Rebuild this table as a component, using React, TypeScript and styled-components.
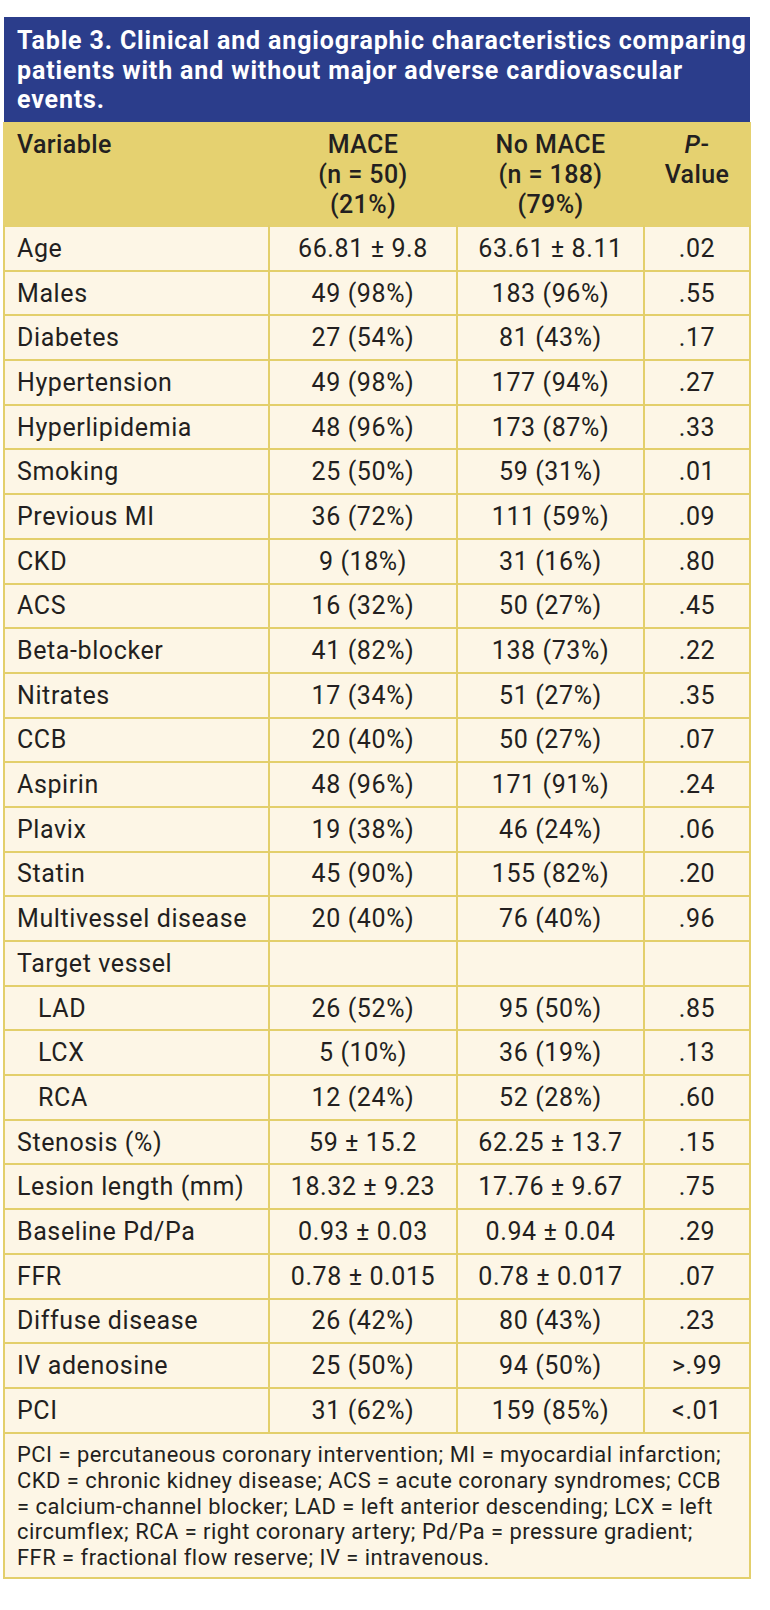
import React from "react";
import styled, { createGlobalStyle } from "styled-components";

const GlobalStyle = createGlobalStyle`
  html, body {
    margin: 0;
    padding: 0;
    background: #ffffff;
  }
  body {
    font-family: Roboto, "Open Sans", sans-serif;
    color: #231f20;
  }
`;

const GOLD = "#e5d170";
const LINE = "#e3cf6b";
const CREAM = "#fdf6e6";
const BLUE = "#2b3d8b";
const INK = "#231f20";
const COLS = "263px 186px 185px 104px";

const Page = styled.div`
  padding: 17px 0 30px 3px;
`;

const Figure = styled.section`
  width: 748px;
`;

const Title = styled.h2`
  margin: 0 0 0 1px;
  width: 746px;
  box-sizing: border-box;
  background: ${BLUE};
  color: #ffffff;
  font-family: Roboto, sans-serif;
  font-weight: 700;
  font-size: 25px;
  letter-spacing: 0.85px;
  line-height: 29.5px;
  padding: 9px 4px 7.5px 13px;
  white-space: nowrap;
`;

const TitleLine = styled.span`
  display: block;
`;

const Table = styled.div`
  display: flex;
  flex-direction: column;
  gap: 2px;
  background: ${LINE};
  padding: 0 2px 2px;
`;

const Row = styled.div<{ $height: number }>`
  display: grid;
  grid-template-columns: ${COLS};
  column-gap: 2px;
  height: ${(p) => p.$height}px;
`;

const HeaderRow = styled(Row)`
  background: ${GOLD};
  margin: 0 -2px;
  padding: 0 2px;
`;

const HeadCell = styled.div<{ $align?: "left" | "center" }>`
  background: ${GOLD};
  font-weight: 500;
  font-size: 25px;
  letter-spacing: 0.4px;
  line-height: 30px;
  color: ${INK};
  white-space: nowrap;
  text-align: ${(p) => p.$align ?? "center"};
  padding: 7.8px ${(p) => (p.$align === "left" ? "4px 0 12px" : "0")};
`;

const HeadLine = styled.span`
  display: block;
`;

const Cell = styled.div<{ $align?: "left" | "center"; $indent?: boolean }>`
  background: ${CREAM};
  display: flex;
  align-items: center;
  justify-content: ${(p) => (p.$align === "left" ? "flex-start" : "center")};
  font-size: 25px;
  font-weight: 400;
  letter-spacing: 0.6px;
  color: ${INK};
  white-space: nowrap;
  padding-left: ${(p) => (p.$align === "left" ? (p.$indent ? 33 : 12) : 0)}px;
`;

const Footnote = styled.div`
  background: ${CREAM};
  font-size: 21.9px;
  letter-spacing: 0.5px;
  line-height: 25.7px;
  color: ${INK};
  padding: 8.7px 4px 6px 12px;
  white-space: nowrap;
`;

const NoteLine = styled.span`
  display: block;
`;

type DataRow = { label: string; mace: string; noMace: string; p: string; indent?: boolean };

const rows: DataRow[] = [
  { label: "Age", mace: "66.81 ± 9.8", noMace: "63.61 ± 8.11", p: ".02" },
  { label: "Males", mace: "49 (98%)", noMace: "183 (96%)", p: ".55" },
  { label: "Diabetes", mace: "27 (54%)", noMace: "81 (43%)", p: ".17" },
  { label: "Hypertension", mace: "49 (98%)", noMace: "177 (94%)", p: ".27" },
  { label: "Hyperlipidemia", mace: "48 (96%)", noMace: "173 (87%)", p: ".33" },
  { label: "Smoking", mace: "25 (50%)", noMace: "59 (31%)", p: ".01" },
  { label: "Previous MI", mace: "36 (72%)", noMace: "111 (59%)", p: ".09" },
  { label: "CKD", mace: "9 (18%)", noMace: "31 (16%)", p: ".80" },
  { label: "ACS", mace: "16 (32%)", noMace: "50 (27%)", p: ".45" },
  { label: "Beta-blocker", mace: "41 (82%)", noMace: "138 (73%)", p: ".22" },
  { label: "Nitrates", mace: "17 (34%)", noMace: "51 (27%)", p: ".35" },
  { label: "CCB", mace: "20 (40%)", noMace: "50 (27%)", p: ".07" },
  { label: "Aspirin", mace: "48 (96%)", noMace: "171 (91%)", p: ".24" },
  { label: "Plavix", mace: "19 (38%)", noMace: "46 (24%)", p: ".06" },
  { label: "Statin", mace: "45 (90%)", noMace: "155 (82%)", p: ".20" },
  { label: "Multivessel disease", mace: "20 (40%)", noMace: "76 (40%)", p: ".96" },
  { label: "Target vessel", mace: "", noMace: "", p: "" },
  { label: "LAD", mace: "26 (52%)", noMace: "95 (50%)", p: ".85", indent: true },
  { label: "LCX", mace: "5 (10%)", noMace: "36 (19%)", p: ".13", indent: true },
  { label: "RCA", mace: "12 (24%)", noMace: "52 (28%)", p: ".60", indent: true },
  { label: "Stenosis (%)", mace: "59 ± 15.2", noMace: "62.25 ± 13.7", p: ".15" },
  { label: "Lesion length (mm)", mace: "18.32 ± 9.23", noMace: "17.76 ± 9.67", p: ".75" },
  { label: "Baseline Pd/Pa", mace: "0.93 ± 0.03", noMace: "0.94 ± 0.04", p: ".29" },
  { label: "FFR", mace: "0.78 ± 0.015", noMace: "0.78 ± 0.017", p: ".07" },
  { label: "Diffuse disease", mace: "26 (42%)", noMace: "80 (43%)", p: ".23" },
  { label: "IV adenosine", mace: "25 (50%)", noMace: "94 (50%)", p: ">.99" },
  { label: "PCI", mace: "31 (62%)", noMace: "159 (85%)", p: "<.01" },
];

const titleLines = [
  "Table 3. Clinical and angiographic characteristics comparing",
  "patients with and without major adverse cardiovascular",
  "events.",
];

const noteLines = [
  "PCI = percutaneous coronary intervention; MI = myocardial infarction;",
  "CKD = chronic kidney disease; ACS = acute coronary syndromes; CCB",
  "= calcium-channel blocker; LAD = left anterior descending; LCX = left",
  "circumflex; RCA = right coronary artery; Pd/Pa = pressure gradient;",
  "FFR = fractional flow reserve; IV = intravenous.",
];

export default function App() {
  return (
    <Page>
      <GlobalStyle />
      <Figure>
        <Title>
          {titleLines.map((l) => (
            <TitleLine key={l}>{l}</TitleLine>
          ))}
        </Title>
        <Table>
          <HeaderRow $height={103}>
            <HeadCell $align="left">Variable</HeadCell>
            <HeadCell>
              <HeadLine>MACE</HeadLine>
              <HeadLine>(n = 50)</HeadLine>
              <HeadLine>(21%)</HeadLine>
            </HeadCell>
            <HeadCell>
              <HeadLine>No MACE</HeadLine>
              <HeadLine>(n = 188)</HeadLine>
              <HeadLine>(79%)</HeadLine>
            </HeadCell>
            <HeadCell>
              <HeadLine>
                <i>P</i>-
              </HeadLine>
              <HeadLine>Value</HeadLine>
            </HeadCell>
          </HeaderRow>
          {rows.map((r) => (
            <Row key={r.label} $height={42.7}>
              <Cell $align="left" $indent={r.indent}>
                {r.label}
              </Cell>
              <Cell>{r.mace}</Cell>
              <Cell>{r.noMace}</Cell>
              <Cell>{r.p}</Cell>
            </Row>
          ))}
          <Footnote>
            {noteLines.map((l) => (
              <NoteLine key={l}>{l}</NoteLine>
            ))}
          </Footnote>
        </Table>
      </Figure>
    </Page>
  );
}
